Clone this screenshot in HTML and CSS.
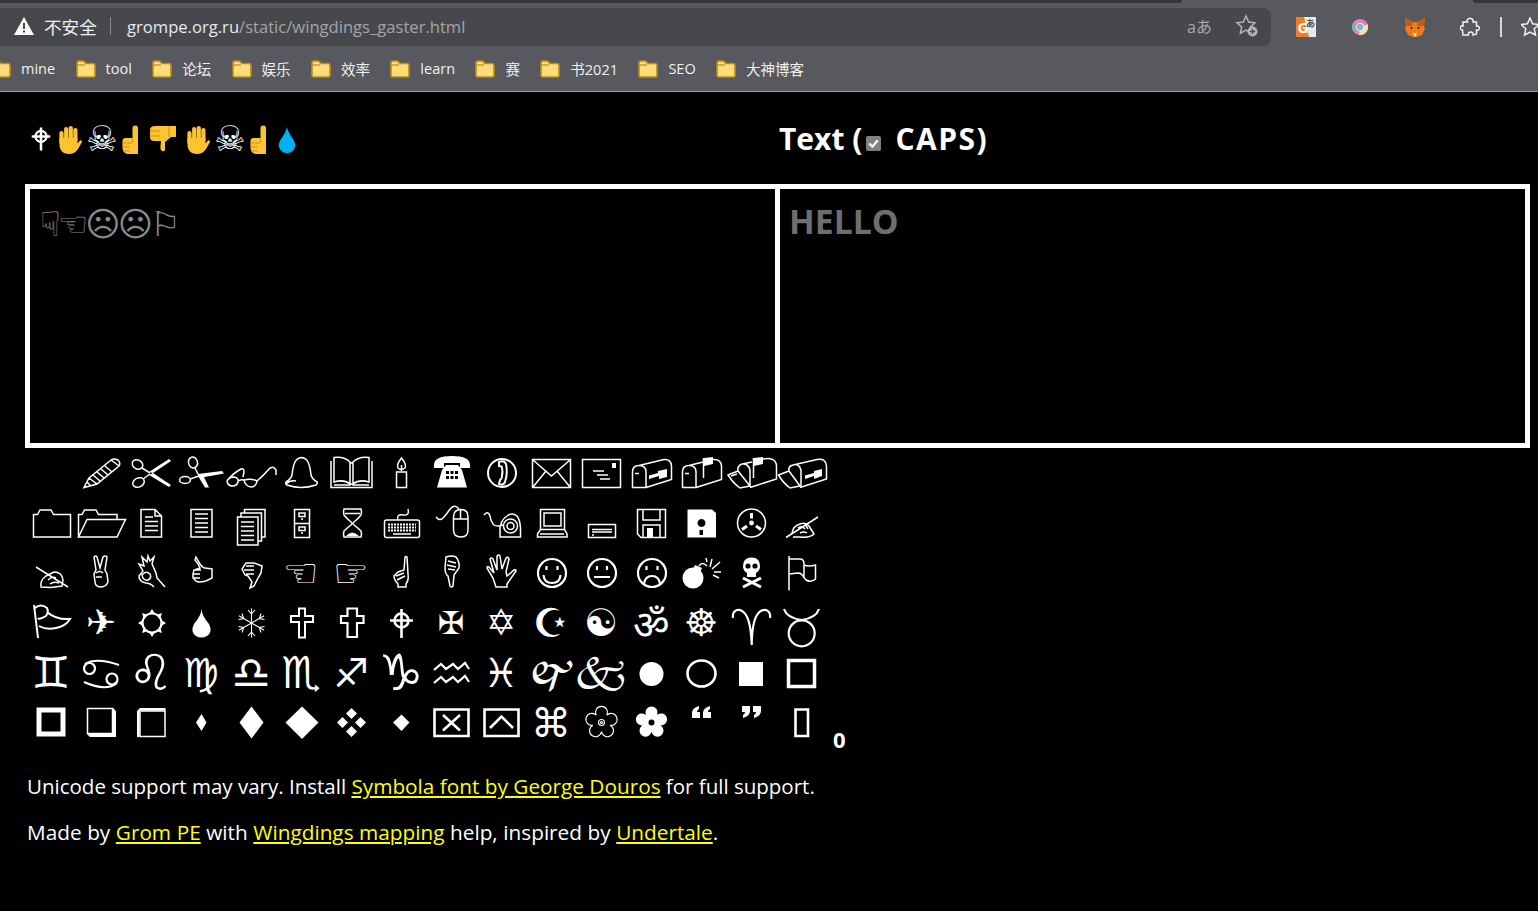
FILE: index.html
```html
<!DOCTYPE html>
<html lang="zh"><head><meta charset="utf-8"><title>Wingdings Gaster</title><link rel="stylesheet" href="styles.css"></head><body>
<header class="chrome">
  <div class="tabstrip"><div class="tab-a"></div><div class="tab-b"></div></div>
  <div class="toolbar">
    <div class="omnibox">
      <svg class="warn" viewBox="0 0 20 20"><path d="M10 1L20 19H0Z" fill="#fff"/><path d="M9 7h2v6H9zM9 14.500h2v2H9z" fill="#47484c"/></svg>
      <span class="insecure">不安全</span><span class="sep"></span>
      <span class="url"><span class="host">grompe.org.ru</span>/static/wingdings_gaster.html</span>
      <span class="tr">aあ</span>
      <svg class="star" viewBox="0 0 24 24"><path d="M11 2l2.700 6 6.300.7-4.700 4.300 1.300 6.200L11 16l-5.600 3.200 1.300-6.200L2 8.700 8.300 8Z" fill="none" stroke="#b5b5b5" stroke-width="1.500"/><circle cx="17.500" cy="17.500" r="5" fill="#b5b5b5"/><path d="M17.500 14.800v5.400M14.800 17.500h5.400" stroke="#47484c" stroke-width="1.300"/></svg>
    </div>
    <div class="exts">
      <svg class="ext e1" viewBox="0 0 20 20"><path d="M0 0H20V20H0Z" fill="#e8e8e6"/><path d="M0 0H8L13 20H0Z" fill="#ee7f24"/><text x="1.500" y="16" class="ext-g">G</text><text x="10" y="10" class="ext-j">あ</text></svg>
      <svg class="ext e2" viewBox="0 0 20 20"><circle cx="10" cy="10" r="9" fill="#e77fa8"/><path d="M10 10L2.500 15A9 9 0 0 1 2 6Z" fill="#6fb8a0"/><path d="M10 10L18.500 7A9 9 0 0 1 9 19Z" fill="#f6e2a6"/><circle cx="10" cy="10" r="4.200" fill="#7db4e6" stroke="#e8e8e8" stroke-width="1.200"/></svg>
      <svg class="ext e3" viewBox="0 0 20 20"><path d="M0 1L8 5H12L20 1L19 9L20 12L17 18L12 20H8L3 18L0 12L1 9Z" fill="#ec7c1c"/><path d="M0 1L8 5L7 9L1 9ZM20 1L12 5L13 9L19 9Z" fill="#b95f18"/><path d="M8 16L10 20L12 16Z" fill="#eee"/><circle cx="6.500" cy="11" r="1" fill="#222"/><circle cx="13.500" cy="11" r="1" fill="#222"/></svg>
      <svg class="ext e4" viewBox="0 0 20 20"><path d="M7.500 2.500Q10.500 0 13 3Q13.500 4 13 5H16.500V9Q19 8.500 19.500 11Q19 14 16.500 13V17L13 18Q13.500 15 10.500 15Q8 15 8.500 18L3 18L2.500 13Q0 13 .5 10.500Q1 8 3 9V5H7.500Q6.500 3.500 7.500 2.500Z" fill="none" stroke="#f1f1f1" stroke-width="1.500"/></svg>
      <span class="tool-sep"></span>
      <svg class="ext e5" viewBox="0 0 20 20"><path d="M9 1l2.600 5.800 6.400.7-4.800 4.300 1.300 6.200L9 15l-5.500 3 1.300-6.200L0 7.500l6.400-.7Z" fill="none" stroke="#f1f1f1" stroke-width="1.500"/></svg>
    </div>
  </div>
  <nav class="bookmarks">
    <a class="bm"><svg class="folder" viewBox="0 0 20 18"><use href="#fd"/></svg>mine</a>
    <a class="bm"><svg class="folder" viewBox="0 0 20 18"><use href="#fd"/></svg>tool</a>
    <a class="bm"><svg class="folder" viewBox="0 0 20 18"><use href="#fd"/></svg>论坛</a>
    <a class="bm"><svg class="folder" viewBox="0 0 20 18"><use href="#fd"/></svg>娱乐</a>
    <a class="bm"><svg class="folder" viewBox="0 0 20 18"><use href="#fd"/></svg>效率</a>
    <a class="bm"><svg class="folder" viewBox="0 0 20 18"><use href="#fd"/></svg>learn</a>
    <a class="bm"><svg class="folder" viewBox="0 0 20 18"><use href="#fd"/></svg>赛</a>
    <a class="bm"><svg class="folder" viewBox="0 0 20 18"><use href="#fd"/></svg>书2021</a>
    <a class="bm"><svg class="folder" viewBox="0 0 20 18"><use href="#fd"/></svg>SEO</a>
    <a class="bm"><svg class="folder" viewBox="0 0 20 18"><use href="#fd"/></svg>大神博客</a>
  </nav>
  <svg class="defs"><defs>
    <g id="fd"><path d="M1 16V3Q1 1 3 1H7.500L10 3.500H17Q19 3.500 19 5.500V16Q19 17 17 17H3Q1 17 1 16Z" fill="#ffdc7a" stroke="#b98d16" stroke-width="1.600"/><path d="M1 5H9" stroke="#b98d16" stroke-width="1.200"/></g>
    <g id="hand"><path d="M3.500 8V17M8.200 4V15M12.800 3V15M17.400 5V15" stroke="#fcc332" stroke-width="4.200" stroke-linecap="round" fill="none"/><path d="M1.400 13H19.500V18.500L22 15.500Q24 14.500 24 17L20 24Q17 29 11 29Q1.400 29 1.400 18Z" fill="#fcc332"/></g>
    <g id="point"><path d="M12.500 .5Q15.500 .5 15.500 3V29H5Q0 28 0 22V16Q0 13 3 13H10V3Q10 .5 12.500 .5Z" fill="#fcc332"/><path d="M10 14V18M0 18H9M0 22H7M1 26H7" stroke="#c8951c" fill="none"/></g>
  </defs></svg>
</header>
<main class="page">
  <div class="heads">
    <h1 class="wing-title">
      <svg class="ti t-cross" viewBox="12 9 27 33"><path d="M25.500 10V41M13 22H38" stroke="#fff" stroke-width="3.400" fill="none"/><circle cx="25.500" cy="22" r="7.500" stroke="#fff" stroke-width="3" fill="none"/></svg>
      <svg class="ti t-hand" viewBox="0 0 24 29"><title>✋</title><use href="#hand"/></svg>
      <span class="t-skull">☠</span>
      <svg class="ti t-point" viewBox="0 0 16 29"><title>☝</title><use href="#point"/></svg>
      <svg class="ti t-down" viewBox="0 0 26 26"><title>👎</title><path d="M5 0H26V11H21L15 16V24Q14 26 12 25Q10 24 10.500 20L11 15H4Q0 15 0 11V4Q0 0 5 0Z" fill="#fcc332"/><path d="M19 0V11M0 5H10M0 10H10" stroke="#c8951c" fill="none"/></svg>
      <svg class="ti t-hand" viewBox="0 0 24 29"><title>✋</title><use href="#hand"/></svg>
      <span class="t-skull">☠</span>
      <svg class="ti t-point" viewBox="0 0 16 29"><title>☝</title><use href="#point"/></svg>
      <svg class="ti t-drop" viewBox="0 0 18 26"><title>💧</title><path d="M9 0Q10 5 15 12Q18 17 17 20Q15 26 9 26Q3 26 1 20Q0 17 3 12Q8 5 9 0Z" fill="#00b0f0"/></svg>
    </h1>
    <h1 class="text-title">Text (<span class="cb"><svg viewBox="0 0 14 14"><path d="M3 7l3 3 5-6" fill="none" stroke="#fff" stroke-width="2"/></svg></span><span class="caps">CAPS)</span></h1>
  </div>
  <div class="panes">
    <div class="pane left">☟☜☹☹⚐</div>
    <div class="pane right">HELLO</div>
  </div>
  <div class="charmap-row">
    <div class="charmap">
      <span class="c"></span>
      <svg class="c" viewBox="0 0 50 50"><path d="M8 39.500L13 30L35 12Q38 10 42 12Q45 15 43 18L21 36ZM13 30L21 36M35 12L43 18M17 27L24 33M21 24L28 30M25 21L32 27M29 18L36 24M11 34L14 37"/></svg>
      <svg class="c" viewBox="0 0 50 50"><ellipse cx="11.500" cy="16.500" rx="5.500" ry="4.500" transform="rotate(30 11.500 16.500)"/><ellipse cx="12.500" cy="34.500" rx="6" ry="4.500" transform="rotate(-25 12.500 34.500)"/><path d="M16 20L24 25M17 31L24 26"/><path class="f" d="M23 24L43 11L45 13L27 25ZM23 27L43 39L45 37L27 25Z"/></svg>
      <svg class="c" viewBox="0 0 50 50"><ellipse cx="17" cy="14.500" rx="4.500" ry="5.500" transform="rotate(-15 17 14.500)"/><ellipse cx="9" cy="32" rx="5.500" ry="3.500"/><path d="M19 20L23 28M14 31L23 28"/><path class="f" d="M22 26L46 23L48 25.500L23 30ZM22 28L27 27L33 39.500L29 39.500Z"/></svg>
      <svg class="c" viewBox="0 0 50 50"><path d="M1 33Q6 26 15 21Q18 20 18 24L17 29M1 33Q2 38 6 38Q11 38 12 34Q13 30 8 29Q3 29 1 33ZM12 33Q16 31 18 32M18 32Q19 38 25 39Q30 39 31 33Q25 30 18 32ZM31 33Q38 27 43 21Q47 17 50 22V27"/></svg>
      <svg class="c" viewBox="0 0 50 50"><path d="M25.500 9.500Q21 10 19 14Q17 18 16 27Q15 31 10 34Q9 36 11 37Q25 42 40 37Q42 35 41 34Q36 31 35 27Q34 18 32 14Q30 10 25.500 9.500ZM10 36Q14 32 20 33"/></svg>
      <svg class="c" viewBox="0 0 50 50"><path d="M5 13V39.500H46V13M8 9.500Q18 8 24 14V36Q18 31 8 34ZM43 9.500Q33 8 27 14V36Q33 31 43 34ZM24 14Q25.500 16 27 14M8 37H24Q25.500 35 27 37H43"/></svg>
      <svg class="c" viewBox="0 0 50 50"><path d="M20.500 24H30.500V39.500H20.500ZM25.500 10Q20 17 22 20Q25 23 29 20Q31 17 25.500 10ZM25.500 17V23"/></svg>
      <svg class="c" viewBox="0 0 50 50"><path class="f" d="M8 17Q8 8 26 8Q44 8 44 17V20H34V15H18V20H8ZM16 22L20 17H32L36 22L41 39.500H11Z"/><path class="k" d="M20 23h3v3h-3zM24.500 23h3v3h-3zM29 23h3v3h-3zM20 28h3v3h-3zM24.500 28h3v3h-3zM29 28h3v3h-3z"/></svg>
      <svg class="c t15" viewBox="0 0 50 50"><circle cx="26" cy="25" r="14"/><path d="M23 14Q28 12 30 16Q32 25 29 34Q27 38 23 36L24 32Q26 31 26 28Q27 23 26 20Q26 18 23 18Z"/></svg>
      <svg class="c" viewBox="0 0 50 50"><path d="M6.500 11.500H44.500V39.500H6.500ZM7 12L25.500 28L44 12M7 39L20 23M44 39L31 23"/></svg>
      <svg class="c" viewBox="0 0 50 50"><path d="M6.500 11.500H44.500V39.500H6.500ZM17 23H28M21 27H32M24 31H34"/><path class="f" d="M36 15H40V20H36Z"/></svg>
      <svg class="c" viewBox="0 0 50 50"><path d="M6.500 39.500V24Q6.500 17.500 13 17.500Q20 17.500 20 24V39.500ZM13 17.500L38 11.500Q45 11 45.500 18V31.500L20 39.500M9 25.500H13"/><path class="f" d="M23 27.500L32 25V23L41 21V29L33 31V28L23 31Z"/></svg>
      <svg class="c" viewBox="0 0 50 50"><path d="M6.500 39.500V24Q6.500 17.500 13 17.500Q20 17.500 20 24V39.500ZM13 17.500L27 14M37 11.500Q45 11 45.500 18V31.500L20 39.500M9 25.500H13M27.500 10V30"/><path class="f" d="M28 10L37 9V16L28 18Z"/></svg>
      <svg class="c" viewBox="0 0 50 50"><path d="M2 27L12 23L24 38L14 40Q8 36 2 27ZM12 23Q11 18 16 16Q22 15 24 22V38M16 16L26 14M35 11.500Q50 8 50.500 18V31L24 39.500M27.500 10V30M5 28L11 26"/><path class="f" d="M28 10L37 9V16L28 18Z"/></svg>
      <svg class="c" viewBox="0 0 50 50"><path d="M2.500 27L13 23L24 38L14 40Q8 36 2.500 27ZM13 23Q12 18 17 17Q23 15 25 22V38M17 17L41 11.500Q50 10 50.500 18V31L24 39.500"/><path class="f" d="M29 27.500L38 25V23L46 21V28L38 31V28L29 31Z"/></svg>

      <svg class="c" viewBox="0 0 50 50"><path d="M7.500 39V16.500H11.500L14 12H25L27.500 16.500H44.500V39Z"/></svg>
      <svg class="c" viewBox="0 0 50 50"><path d="M2.500 39V16.500H6L8.500 12H20L22.500 16.500H41V22M2.500 39L11 21.500H49.500L41 39Z"/></svg>
      <svg class="c" viewBox="0 0 50 50"><path d="M15 11.500H29L35.500 18V39H15ZM29 11.500V18H35.500M19 19H27M19 23.500H32M19 28H32M19 32.500H32"/></svg>
      <svg class="c" viewBox="0 0 50 50"><path d="M15 11.500H36V39H15ZM19 16H32M19 20.500H32M19 25H32M19 29.500H32M19 34H32"/></svg>
      <svg class="c" viewBox="0 0 50 50"><path d="M11.500 19H32V47H11.500ZM15 19V15H35.500V43H32M18.500 15V11.500H39V39H35.500M15 24H28M15 28.500H28M15 33H28M15 37.500H28M15 42H28"/></svg>
      <svg class="c" viewBox="0 0 50 50"><path d="M18.500 11.500H33.500V39.500H18.500ZM18.500 25.500H33.500M23 15H29V18.500H23ZM23 29H29V32.500H23ZM25 21H27M25 35H27"/></svg>
      <svg class="c" viewBox="0 0 50 50"><path d="M18 11H35Q36 14 35 17Q32 21 28 24Q26 25.500 28 27Q32 30 35 33Q36 36 35 39H18Q17 36 18 33Q21 30 25 27Q27 25.500 25 24Q21 21 18 17Q17 14 18 11ZM19 15.500H34"/><path class="f" d="M20 38Q26 31 33 38Z"/></svg>
      <svg class="c" viewBox="0 0 50 50"><path d="M22 22Q20 16 27 17Q34 18 32 11M8.500 24Q8.500 22 10.500 22H41.500Q43.500 22 43.500 24V37.500Q43.500 39.500 41.500 39.500H10.500Q8.500 39.500 8.500 37.500ZM17 36H35"/><path class="keys" d="M12 26.500H40M12 29.500H40M12 32.500H40"/></svg>
      <svg class="c" viewBox="0 0 50 50"><path d="M10 19Q14 24 18 19Q22 14 25 10Q29 6 33 11M27.500 19Q27.500 11.500 35 11.500Q42 11.500 42 19V32Q42 39 35 39Q27.500 39 27.500 32ZM27.500 21H42M34.500 11.500V21"/></svg>
      <svg class="c" viewBox="0 0 50 50"><path d="M8 17Q12 12 14 18Q15 24 18 27Q21 29 27 27M24 39V30Q25 22 31 18Q36 14 41 18Q44 22 44.500 30V39Z"/><circle cx="34.500" cy="28" r="7"/><circle cx="34.500" cy="28" r="3.500"/></svg>
      <svg class="c" viewBox="0 0 50 50"><path d="M14.500 11.500H38.500V31.500H14.500ZM18 15H35V28H18ZM11.500 39V36L14.500 31.500H38.500L41 36V39ZM14 36H38"/></svg>
      <svg class="c" viewBox="0 0 50 50"><path d="M12.500 26.500H39.500V39.500H12.500ZM16 31.500H36M16 34H36M16 37H18"/></svg>
      <svg class="c" viewBox="0 0 50 50"><path d="M11.500 11.500H39.500V39.500H15L11.500 36ZM17 11.500V22H34V11.500M17 39.500V27H34V39.500"/><path class="f" d="M21 30H27V39.500H21Z"/></svg>
      <svg class="c" viewBox="0 0 50 50"><path class="f" fill-rule="evenodd" d="M11.500 11.500H36L40 15V39.500H11.500ZM25.500 21a4 4 0 1 0 .01 0ZM23.500 32V37H27V32Z"/></svg>
      <svg class="c" viewBox="0 0 50 50"><circle cx="25.500" cy="25" r="14"/><circle class="f" cx="25.500" cy="25" r="2.400"/><path class="t3" d="M25.500 20.500V15M21 28L16 31.500M30 28L35 31.500"/></svg>
      <svg class="c" viewBox="0 0 50 50"><path d="M10 39.500L42 19M16 35Q17 28 24 26Q30 24 33 28L38 36Q34 40 24 39L17 39M22 30Q26 27 29 31M24 35Q28 33 31 35M29 26L32 31"/></svg>

      <svg class="c" viewBox="0 0 50 50"><path d="M10 19L42 39M15 39Q14 32 20 28L28 24Q36 24 37 32L36 38L25 39.500ZM22 32Q26 28 30 30M24 36Q28 33 33 35"/></svg>
      <svg class="c" viewBox="0 0 50 50"><path d="M18 9Q20 7 21 9L24 20L27 9Q29 7 31 9L29 22L31 26L32 34Q30 39 24 39Q19 38 19 34L18 26L20 22ZM20 25Q24 22 27 25M20 29L26 29"/></svg>
      <svg class="c" viewBox="0 0 50 50"><path d="M39 39L31 30L30 25L26 16L28 9L24 13L22 8L21 14L16 9L18 18L13 16L17 23L13 28Q13 34 20 35Q24 35 28 39M16 27Q20 22 24 26Q26 30 22 32Q17 33 16 27Z"/></svg>
      <svg class="c" viewBox="0 0 50 50"><path d="M20 9L24 16Q27 20 29 20L36 21V30L30 33Q22 35 20 33L17 30V26L18 22L24 20Q22 15 19 12ZM17 26H24M17 30H24M18 22H25"/></svg>
      <svg class="c" viewBox="0 0 50 50"><path d="M36 18L28 15H20L16 21L19 27L22 28L26 34L24 40L28 38L32 30L35 25ZM20 18H28M18 22H28M20 26H28"/></svg>
      <span class="c z40">☜</span>
      <span class="c z40">☞</span>
      <svg class="c" viewBox="0 0 50 50"><path d="M29 9Q30 8 31 9L32 26Q33 32 30 36V39H22V36Q18 32 18 28L22 24L28 22ZM20 28L28 25M21 32L29 28"/></svg>
      <svg class="c" viewBox="0 0 50 50"><path d="M20 9Q26 7 30 9Q34 14 33 20L28 27L27 38Q25 40 24 38L22 28Q19 26 19 20ZM22 13L30 15M21 17L30 19M22 21L29 22"/></svg>
      <svg class="c" viewBox="0 0 50 50"><path d="M20 39L17 30L11 20Q11 18 13 19L18 25L14 11Q15 9 17 11L21 22L21 8Q23 6 24 8L26 21L30 10Q32 8 33 11L30 24L31 28L38 22Q40 21 40 23L31 36V39Z"/></svg>
      <svg class="c t2" viewBox="0 0 50 50"><circle cx="26" cy="25" r="14"/><path d="M20.500 18V22M31.500 18V22M17.500 27Q18 35 26 35Q34 35 34.500 27"/></svg>
      <svg class="c t2" viewBox="0 0 50 50"><circle cx="26" cy="25" r="14"/><path d="M18 29H34M21 18V22M31 18V22"/></svg>
      <svg class="c t2" viewBox="0 0 50 50"><circle cx="26" cy="25" r="14"/><path d="M20.500 18V22M31.500 18V22M18 36Q19 28 26 28Q33 28 34 36"/></svg>
      <svg class="c" viewBox="0 0 50 50"><circle class="f" cx="17" cy="30" r="10.500"/><path class="f" d="M19 17L26 20L24 24L17 21Z"/><path d="M23 18Q26 13 31 18M34 19L36 11M36 21L44 14M38 24H45M31 14L30 10M37 27L43 30"/></svg>
      <svg class="c" viewBox="0 0 50 50"><path class="f" d="M25.500 9.500Q34 9.500 34 18Q34 23 30 25V29H21V25Q17 23 17 18Q17 9.500 25.500 9.500Z"/><circle class="k" cx="22" cy="18" r="2.600"/><circle class="k" cx="29" cy="18" r="2.600"/><path class="t3" d="M17 30L35 39M35 30L17 39"/></svg>
      <svg class="c" viewBox="0 0 50 50"><path d="M13 8V42.500M13 11H24Q28 11 28 16V30Q26 25 22 25L13 26M28 17Q33 19 39.500 17V31Q35 35 30 32Q28 30 28 29"/></svg>

      <svg class="c t15" viewBox="0 0 50 50"><path d="M8 7L12 40M9 10Q15 5 21 10Q23 14 20 18Q13 22 12 20M21 14Q30 22 44 21Q40 28 30 30Q20 32 13 28"/></svg>
      <span class="c z36">✈</span>
      <svg class="c t2" viewBox="0 0 50 50"><circle cx="26" cy="25" r="9.500"/><path class="f" d="M26 11L28.500 15H23.500ZM26 39L23.500 35H28.500ZM12 25L16 22.500V27.500ZM40 25L36 27.500V22.500ZM16 15L20.500 16.500L17.500 19.500ZM36 15L34.500 19.500L31.500 16.500ZM16 35L17.500 30.500L20.500 33.500ZM36 35L31.500 33.500L34.500 30.500Z"/></svg>
      <svg class="c" viewBox="0 0 50 50"><path class="f" d="M25.500 11Q26 18 33 26Q37 34 31 38Q25.500 41 20 38Q14 34 18 26Q25 18 25.500 11Z"/></svg>
      <svg class="c t1" viewBox="0 0 50 50"><g id="flake"><path d="M25.500 10.500V39.500M22 12L25.500 16L29 12M22 38L25.500 34L29 38"/></g><use href="#flake" transform="rotate(60 25.500 25)"/><use href="#flake" transform="rotate(120 25.500 25)"/></svg>
      <svg class="c t15" viewBox="0 0 50 50"><path d="M23 10.500H29V18H37V24H29V39.500H23V24H15V18H23Z"/></svg>
      <svg class="c t2" viewBox="0 0 50 50"><path d="M21.500 10.500H31V18H37.500V25H31V39H21.500V25H15V18H21.500Z"/></svg>
      <svg class="c t25" viewBox="0 0 50 50"><path d="M25.500 11V40M14 22.500H37"/><circle cx="25.500" cy="22.500" r="7"/></svg>
      <span class="c z32">✠</span>
      <span class="c z36">✡</span>
      <span class="c z40">☪</span>
      <span class="c z38">☯</span>
      <span class="c z40 n4">ॐ</span>
      <span class="c z38">☸</span>
      <svg class="c t2" viewBox="0 0 50 50"><path d="M25.700 47Q25 25 20 17Q16 11 11 12Q6 14 7 20M25.700 47Q26 25 31 17Q35 11 40 12Q45 14 44 20"/></svg>
      <svg class="c t2" viewBox="0 0 50 50"><circle cx="25.700" cy="35.300" r="13"/><path d="M8 11Q11 20 25.500 22Q40 20 43 11"/></svg>

      <span class="c z44">♊</span>
      <svg class="c t2" viewBox="0 0 50 50"><circle cx="13.500" cy="20.500" r="5.500"/><circle cx="36" cy="31" r="5.500"/><path d="M9 16Q20 9 43 17M41 35Q30 44 8 34"/></svg>
      <span class="c z50">♌</span>
      <span class="c z40">♍</span>
      <span class="c z44">♎</span>
      <span class="c z44">♏</span>
      <span class="c z40">♐</span>
      <span class="c z50">♑</span>
      <svg class="c t2" viewBox="0 0 50 50"><path d="M8 22L15 16L20 21L27 16L32 21L39 15L43 21M8 35L15 29L20 34L27 29L32 34L39 28L43 34"/></svg>
      <span class="c z40">♓</span>
      <span class="c z40">🙰</span>
      <span class="c z44">🙵</span>
      <svg class="c" viewBox="0 0 50 50"><circle class="f" cx="25.500" cy="26" r="12"/></svg>
      <svg class="c t25" viewBox="0 0 50 50"><ellipse cx="25.500" cy="25.500" rx="14" ry="13"/></svg>
      <svg class="c" viewBox="0 0 50 50"><path class="f" d="M13 14H37V38H13Z"/></svg>
      <svg class="c t35" viewBox="0 0 50 50"><path d="M12.500 12.500H38.500V38.500H12.500Z"/></svg>

      <svg class="c t5" viewBox="0 0 50 50"><path d="M13 12H37V36H13Z"/></svg>
      <svg class="c" viewBox="0 0 50 50"><path d="M11.500 10.500H36.500V35.500H11.500Z"/><path class="f" d="M11 36H37V10L40 13V39H14Z"/></svg>
      <svg class="c" viewBox="0 0 50 50"><path d="M14 13H39V38.500H14Z"/><path class="f" d="M13.500 12.500H39.500V10L14 10L11 13V39H13.500Z"/></svg>
      <svg class="c" viewBox="0 0 50 50"><path class="f" d="M25.500 16L30.500 24.500L25.500 33L20 24.500Z"/></svg>
      <svg class="c" viewBox="0 0 50 50"><path class="f" d="M25.500 8.500L37.500 24.500L25.500 40.500L13.500 24.500Z"/></svg>
      <svg class="c" viewBox="0 0 50 50"><path class="f" d="M26 8.500L42.500 24.500L26 41L9.500 24.500Z"/></svg>
      <svg class="c" viewBox="0 0 50 50"><path class="f" d="M25.500 10L31 15.500L25.500 21L20 15.500ZM25.500 28L31 33.500L25.500 39L20 33.500ZM11 24.500L16.500 19L22 24.500L16.500 30ZM29 24.500L34.500 19L40 24.500L34.500 30Z"/></svg>
      <svg class="c" viewBox="0 0 50 50"><path class="f" d="M25.500 16.500L33.500 24.500L25.500 33L17 24.500Z"/></svg>
      <svg class="c t25" viewBox="0 0 50 50"><path d="M8.500 11.500H42.500V38H8.500ZM17 17L34 32.500M34 17L17 32.500"/></svg>
      <svg class="c t25" viewBox="0 0 50 50"><path d="M8.500 11.500H42.500V38H8.500ZM14 30L25.500 18.500L37 30"/></svg>
      <span class="c z40">⌘</span>
      <svg class="c t1" viewBox="0 0 50 50"><path d="M20.200 17.200A6 6 0 1 1 30.800 17.200A6 6 0 1 1 34.060 27.300A6 6 0 1 1 25.500 33.500A6 6 0 1 1 16.900 27.300A6 6 0 1 1 20.200 17.200Z"/><circle cx="25.500" cy="24.500" r="3"/><circle cx="25.500" cy="24.500" r="1"/></svg>
      <svg class="c" viewBox="0 0 50 50"><path class="f" d="M20.200 17.200A6 6 0 1 1 30.800 17.200A6 6 0 1 1 34.060 27.300A6 6 0 1 1 25.500 33.500A6 6 0 1 1 16.900 27.300A6 6 0 1 1 20.200 17.200Z"/><circle class="k" cx="25.500" cy="24.500" r="3"/></svg>
      <svg class="c" viewBox="0 0 50 50"><path class="f" d="M16 20V15Q16 10 23 8V11Q21 12 21 14H24V20ZM27 20V15Q27 10 34 8V11Q32 12 32 14H35V20Z"/></svg>
      <svg class="c" viewBox="0 0 50 50"><path class="f" d="M35 8V13Q35 18 28 20V17Q30 16 30 14H27V8ZM24 8V13Q24 18 17 20V17Q19 16 19 14H16V8Z"/></svg>
      <svg class="c t25" viewBox="0 0 50 50"><path d="M19.500 11.500H32V38H19.500Z"/></svg>
    </div>
    <span class="count">0</span>
  </div>
  <p class="note l1">Unicode support may vary. Install <a href="#">Symbola font by George Douros</a> for full support.</p>
  <p class="note l2">Made by <a href="#">Grom PE</a> with <a href="#">Wingdings mapping</a> help, inspired by <a href="#">Undertale</a>.</p>
</main>
</body></html>
```
FILE: styles.css
```css
*{box-sizing:border-box}
html,body{margin:0;height:100%;overflow:hidden}
body{background:#000;color:#fff;font-family:"Open Sans","Noto Sans CJK SC",sans-serif}
.chrome{height:92px;background:#58595e;border-bottom:1px solid #a0a0a0;display:flex;flex-direction:column}
.tabstrip{height:3px;display:flex;justify-content:space-between;flex:none}
.tab-a,.tab-b{background:#36373a}
.tab-a{width:1182px;border-radius:0 0 4px 0}
.tab-b{width:65px;border-radius:0 0 0 4px}
.toolbar{display:flex;height:43px;padding-top:5px;flex:none}
.omnibox{width:1271px;height:38px;background:#47484c;border-radius:0 8px 8px 0;display:flex;align-items:center;padding:0 0 2px 14px;font-size:16.600px;flex:none}
.warn{width:20px;height:20px;flex:none}
.insecure{margin-left:10px;width:53px;flex:none;white-space:nowrap;color:#f0f0f0;font-size:17.600px}
.sep{width:1px;height:18px;background:#8a8b8e;margin:0 16px 0 13px;flex:none}
.url{color:#a3a5a8;white-space:nowrap;flex:1}
.host{color:#e8eaed}
.tr{color:#a8a9ac;font-size:16px;margin-right:23px}
.star{width:24px;height:24px;margin-right:12px;flex:none}
.exts{display:flex;align-items:center;padding-left:25px;flex:1;overflow:hidden;height:38px}
.ext{width:20px;height:20px;flex:none}
.e1,.e2,.e3{margin-right:35px}
.e2{width:18px;height:18px;margin-right:36px}
.e4{margin-right:20px}
.ext-g{font:bold 15px "Open Sans",sans-serif;fill:#fff}
.ext-j{font:bold 9px "Noto Sans CJK JP",sans-serif;fill:#456}
.tool-sep{width:2px;height:20px;background:#d8d8d8;margin-right:19px;flex:none}
.bookmarks{display:flex;align-items:center;height:45px;margin-left:-9px;gap:20.400px;font-size:14.500px;color:#f0f0f0;white-space:nowrap;flex:none}
.bm{display:flex;align-items:center;gap:10px}
.folder{width:20px;height:18px;flex:none}
.defs{width:0;height:0;position:absolute}
.page{padding-left:25px;width:1530px}
.heads{display:grid;grid-template-columns:754px 1fr;height:92px;align-items:center;padding-top:2px}
.heads h1{margin:0;font-size:30px;font-weight:700;line-height:40px}
.wing-title{padding-left:6px;display:flex;align-items:center;gap:6px;font-family:"DejaVu Sans",sans-serif}
.heads .wing-title{font-size:35px}
.ti{flex:none;display:block}
.t-cross{width:20px;height:26px;margin-right:1px}
.t-hand{width:24px;height:29px}
.t-point{width:17px;height:29px;margin-right:5px}
.t-down{width:26px;height:26px;margin-right:4px}
.t-drop{width:18px;height:26px;margin-top:2px}
.t-skull{width:28px;display:flex;justify-content:center}
.text-title{white-space:nowrap}
.cb{display:inline-block;width:15px;height:15px;background:#808080;border-radius:2px;vertical-align:-1px;margin:0 14px 0 4px}
.cb svg{display:block;width:15px;height:15px}
.caps{letter-spacing:1.500px}
.panes{display:grid;grid-template-columns:750px 1fr;height:264px;border:5px solid #fff}
.pane{color:#6e6e6e;height:254px}
.left{border-right:5px solid #fff;font:34px/70px "DejaVu Sans",sans-serif;padding-left:10px;color:#8a8a8a;letter-spacing:-3px}
.right{font-size:33.700px;font-weight:700;line-height:64px;padding-left:9px}
.charmap-row{display:flex;align-items:flex-end;gap:7px;padding-left:1px}
.charmap{display:grid;grid-template-columns:repeat(16,50px);grid-auto-rows:50px;font-family:"DejaVu Sans",sans-serif}
.c{width:50px;height:50px;display:flex;align-items:center;justify-content:center;overflow:visible;fill:none;stroke:#fff;stroke-width:1.500;white-space:nowrap;line-height:1}
.c .f{fill:#fff;stroke:none}
.c .k{fill:#000;stroke:none}
.keys{stroke-dasharray:2 1;stroke-width:2}
.t1{stroke-width:1.100}
.t15{stroke-width:2}
.t2{stroke-width:2.200}
.t25{stroke-width:2.600}
.t3{stroke-width:3}
.t35{stroke-width:3.500}
.t5{stroke-width:5}
.n4{padding-top:4px}
.z32{font-size:32px}.z35{font-size:35px}.z36{font-size:36px}.z38{font-size:38px}.z40{font-size:40px}
.z44{font-size:44px}.z46{font-size:46px}.z48{font-size:48px}.z50{font-size:50px}.z52{font-size:52px}.z54{font-size:54px}
.count{font-size:22px;font-weight:700;line-height:24px;margin-bottom:-3px}
.note{margin:18px 0 0 2px;line-height:28px;white-space:nowrap}
.charmap-row + .note{margin-top:24px}
.l1{font-size:20.500px}
.l1 a{font-size:20.770px}
.l2{font-size:20.750px;word-spacing:.2px}
.note a{color:#ff0;text-decoration:underline}
```
